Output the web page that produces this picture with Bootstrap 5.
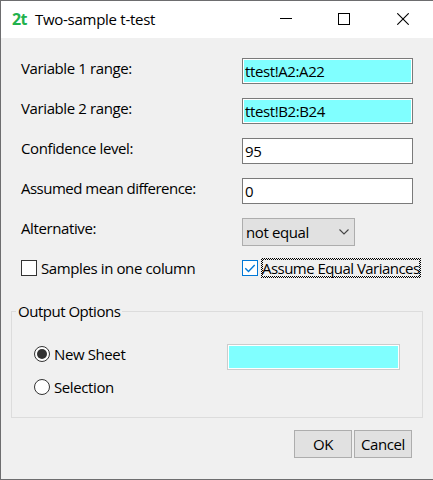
<!DOCTYPE html>
<html lang="en">
<head>
<meta charset="utf-8">
<meta name="viewport" content="width=device-width, initial-scale=1">
<title>Two-sample t-test</title>
<link href="https://cdn.jsdelivr.net/npm/bootstrap@5.3.0/dist/css/bootstrap.min.css" rel="stylesheet">
<style>
body{font-family:"Open Sans","Noto Sans",sans-serif;font-size:15px;line-height:20px;color:#000;letter-spacing:-.39px;background:#f0f0f0}
.win{width:433px;height:480px;background:#f0f0f0;border:solid #6d6d6f;border-width:1px 0 1px 1px}
.titlebar{height:37px;background:#fff;padding-left:11px}
.logo{width:23px;font-weight:700;font-size:16px;color:#22b14c;letter-spacing:-.6px;margin-top:-1px}
.t-title{letter-spacing:-.28px;margin-top:-1px}
.capbtn{width:58px;height:37px;background:none}
.capbtn svg{display:block;margin:-1px auto 0}
.capset{margin-right:1px}
.capmax{margin-right:1px}
.form-area{padding:20px 0 0 20px}
.line{height:40px}
.lbl{width:221px}
.t-diff{letter-spacing:-.51px}
.t-eq{letter-spacing:-.54px}
.field{width:171px;height:26px;border:1px solid #7a7a7a;border-radius:0;padding:2px 2px 2px;font-size:15px;line-height:20px;letter-spacing:inherit;background:#fff;color:#000}
.field.aqua{background:#80ffff;box-shadow:inset 0 0 0 1px #fff}
.field.sheet{width:173px;border-color:#ccc}
.combo{width:113px;height:28px;background:#e1e1e1;border:1px solid #adadad;padding:0 4px 0 3px}
.line-checks{height:20px}
.tick{width:16px;height:16px;background:#fff;border:1px solid #333}
.tick.on{border-color:#0078d7}
.focus-box{width:160px;height:20px;border:2px solid transparent;margin-left:3px;background:linear-gradient(#f0f0f0,#f0f0f0) padding-box,repeating-conic-gradient(#000 0 25%,#f0f0f0 0 50%) 0 0/2px 2px border-box}
.t-eq{margin-left:-1px}
.group{width:412px;height:117px;margin:23px 0 0 10px;border:1px solid #dcdcdc;padding:0}
.group legend{font-size:15px;line-height:20px;margin:0 0 0 4px;padding:0 2px;letter-spacing:-.49px}
.radio-list{width:193px;margin-left:22px}
.radio-gap{margin-bottom:13px}
.group-body{padding-top:23px}
.push{background:#e1e1e1;border:1px solid #adadad;border-radius:0;width:58px;height:28px;padding:0;font-size:15px;line-height:20px;letter-spacing:inherit;color:#000}
.actions{gap:2px;margin-top:12px;padding-right:21px}
</style>
<script src="https://cdn.jsdelivr.net/npm/bootstrap@5.3.0/dist/js/bootstrap.bundle.min.js"></script>
</head>
<body class="m-0 overflow-hidden">
<div class="win">
  <header class="titlebar d-flex align-items-center">
    <span class="logo">2t</span>
    <span class="t-title">Two-sample t-test</span>
    <div class="capset d-flex ms-auto">
      <button class="capbtn border-0 p-0" aria-label="Minimize"><svg width="12" height="12" shape-rendering="crispEdges"><path d="M0 5.500h12" stroke="#000"/></svg></button>
      <button class="capbtn capmax border-0 p-0" aria-label="Maximize"><svg width="12" height="12" shape-rendering="crispEdges"><path d="M.5.5h11v11H.5z" fill="none" stroke="#000"/></svg></button>
      <button class="capbtn border-0 p-0" aria-label="Close"><svg width="12" height="12"><path d="M.3.3l11.400 11.400M11.700.3L.3 11.700" stroke="#000" stroke-width="1.100"/></svg></button>
    </div>
  </header>
  <div class="form-area">
    <div class="line d-flex"><label class="lbl" for="v1">Variable 1 range:</label><input id="v1" class="form-control field aqua" value="ttest!A2:A22"></div>
    <div class="line d-flex"><label class="lbl" for="v2">Variable 2 range:</label><input id="v2" class="form-control field aqua" value="ttest!B2:B24"></div>
    <div class="line d-flex"><label class="lbl" for="cl">Confidence level:</label><input id="cl" class="form-control field" value="95"></div>
    <div class="line d-flex"><label class="lbl t-diff" for="md">Assumed mean difference:</label><input id="md" class="form-control field" value="0"></div>
    <div class="line d-flex"><span class="lbl">Alternative:</span>
      <div class="combo d-flex align-items-center justify-content-between"><span>not equal</span><svg width="12" height="8"><path d="M1.500 1.500L6 6l4.500-4.500" fill="none" stroke="#444" stroke-width="1.100"/></svg></div>
    </div>
    <div class="line-checks d-flex">
      <div class="lbl d-flex align-items-center p-0"><span class="tick me-1"></span><span>Samples in one column</span></div>
      <div class="d-flex align-items-center"><span class="tick on"><svg class="d-block" width="14" height="14"><path d="M2.300 7.200l3.200 3.200 6.200-6.400" fill="none" stroke="#0078d7" stroke-width="1.400"/></svg></span><span class="focus-box d-flex align-items-center text-nowrap"><span class="t-eq">Assume Equal Variances</span></span></div>
    </div>
  </div>
  <fieldset class="group">
    <legend class="float-none w-auto">Output Options</legend>
    <div class="group-body d-flex">
      <div class="radio-list">
        <div class="radio-gap d-flex align-items-center"><svg width="16" height="16" class="me-1"><circle cx="8" cy="8" r="7.500" fill="#fff" stroke="#333"/><circle cx="8" cy="8" r="5" fill="#333"/></svg><span>New Sheet</span></div>
        <div class="d-flex align-items-center"><svg width="16" height="16" class="me-1"><circle cx="8" cy="8" r="7.500" fill="#fff" stroke="#333"/></svg><span>Selection</span></div>
      </div>
      <input class="form-control field aqua sheet" aria-label="New sheet name">
    </div>
  </fieldset>
  <div class="actions d-flex justify-content-end"><button class="btn push">OK</button><button class="btn push">Cancel</button></div>
</div>
</body>
</html>
